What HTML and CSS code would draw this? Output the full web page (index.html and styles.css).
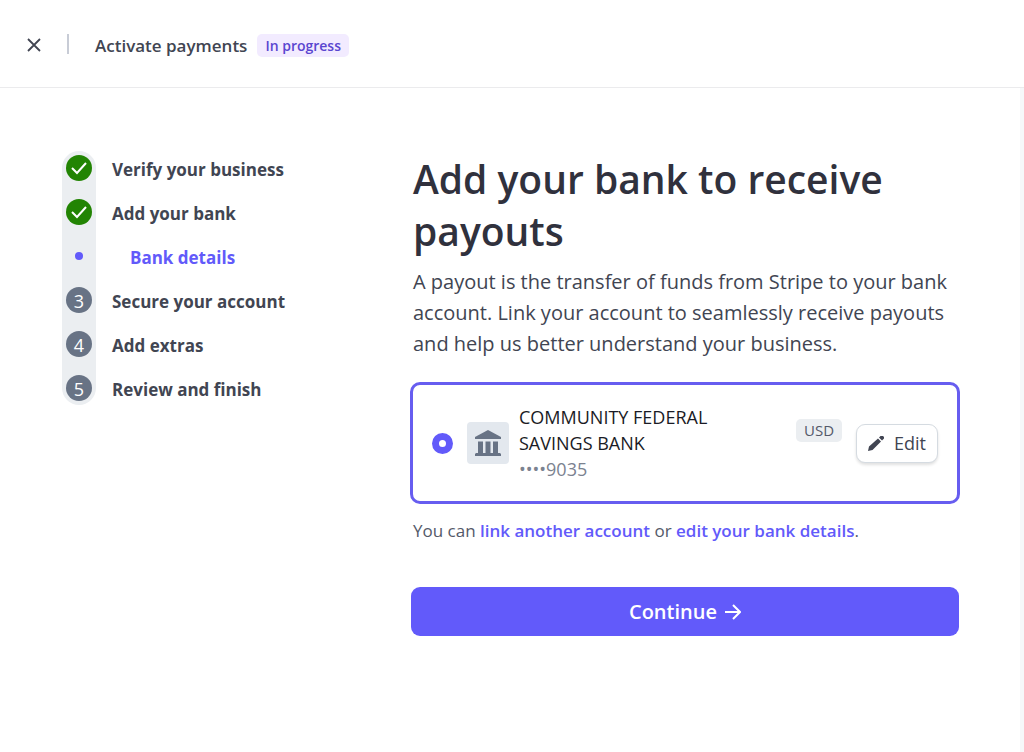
FILE: index.html
```
<!DOCTYPE html>
<html lang="en">
<head>
    <meta charset="UTF-8">
    <meta name="viewport" content="width=device-width, initial-scale=1.0">
    <title>Activate payments</title>
    <link rel="stylesheet" href="styles.css">
</head>
<body>
    <header class="topbar">
        <button class="close" type="button" aria-label="Close">
            <svg width="14" height="14" viewBox="0 0 14 14"><path d="M1 1l12 12M13 1L1 13" fill="none" stroke="currentColor" stroke-width="1.8"/></svg>
        </button>
        <span class="divider"></span>
        <span class="topbar-title">Activate payments</span>
        <span class="badge badge-progress">In progress</span>
    </header>

    <div class="page">
        <nav class="sidebar" aria-label="Setup steps">
            <ol class="steps">
                <li class="step">
                    <span class="marker marker-done"><svg width="18" height="14" viewBox="0 0 18 14"><path d="M2 7l5 5L16 2" fill="none" stroke="currentColor" stroke-width="2"/></svg></span>
                    <a href="#">Verify your business</a>
                </li>
                <li class="step">
                    <span class="marker marker-done"><svg width="18" height="14" viewBox="0 0 18 14"><path d="M2 7l5 5L16 2" fill="none" stroke="currentColor" stroke-width="2"/></svg></span>
                    <a href="#">Add your bank</a>
                </li>
                <li class="step step-current">
                    <span class="marker"><span class="dot"></span></span>
                    <a href="#" aria-current="step">Bank details</a>
                </li>
                <li class="step">
                    <span class="marker marker-todo">3</span>
                    <a href="#">Secure your account</a>
                </li>
                <li class="step">
                    <span class="marker marker-todo">4</span>
                    <a href="#">Add extras</a>
                </li>
                <li class="step">
                    <span class="marker marker-todo">5</span>
                    <a href="#">Review and finish</a>
                </li>
            </ol>
        </nav>

        <main class="content">
            <h1>Add your bank to receive payouts</h1>
            <p class="intro">A payout is the transfer of funds from Stripe to your bank account. Link your account to seamlessly receive payouts and help us better understand your business.</p>

            <div class="account">
                <input class="account-radio" type="radio" name="account" id="account-9035" checked>
                <label class="account-label" for="account-9035">
                    <span class="bank-icon">
                        <svg width="28" height="28" viewBox="0 0 28 28" fill="currentColor">
                            <path d="M14 1L27 8v2H1V8z"/>
                            <path d="M4 12.500h5V24H4zM11.500 12.500h5V24h-5zM19 12.500h5V24h-5zM2 24h24l1 1v2H1v-2z"/>
                        </svg>
                    </span>
                    <span class="account-text">
                        <span class="bank-name">COMMUNITY FEDERAL SAVINGS BANK</span>
                        <span class="bank-number">••••9035</span>
                    </span>
                </label>
                <span class="badge badge-currency">USD</span>
                <button class="edit" type="button">
                    <svg width="16" height="16" viewBox="0 0 16 16" fill="currentColor"><path d="M0 16l1-4.500L10 3.500l3 3-8.500 8.500zM11 2.500L12.500 1H15l1 1v1.500L14 5.500z"/></svg>
                    Edit
                </button>
            </div>

            <p class="hint">You can <a href="#">link another account</a> or <a href="#">edit your bank details</a>.</p>

            <div class="actions">
                <button class="continue" type="button">
                    Continue
                    <svg width="16" height="16" viewBox="0 0 16 16"><path d="M0 8h15M8 1l7 7-7 7" fill="none" stroke="currentColor" stroke-width="2"/></svg>
                </button>
            </div>
        </main>
    </div>
</body>
</html>
```

FILE: styles.css
```
* { box-sizing: border-box; }
body { display: flex; flex-direction: column; min-height: 100vh; margin: 0; font-family: "Open Sans", "Noto Sans", sans-serif; font-size: 18px; color: #414552; background: #fff; }
a { color: #625afa; text-decoration: none; }
button { font-family: inherit; cursor: pointer; }
svg { display: block; flex: none; }

.topbar { display: flex; align-items: center; height: 88px; padding: 3px 24px 0; border-bottom: 1px solid #ebebed; }
.close { padding: 3px; border: 0; background: none; color: #414552; }
.divider { width: 2px; height: 20px; margin: 0 26px 2px 23px; background: #c8ccd6; }
.topbar-title { font-size: 17px; font-weight: 600; }
.badge { border-radius: 5px; font-size: 15px; line-height: 23px; padding: 0 8px; }
.badge-progress { margin-left: 10px; background: #f2ebff; color: #5a46d0; font-size: 14px; font-weight: 600; }

.page { display: flex; flex: 1; padding: 63px 60px 40px 62px; border-right: 4px solid #f6f8fa; }
.sidebar { flex: 0 0 348px; }
/* the grey track is as wide as the markers, the labels run out to its right */
.steps { display: flex; flex-direction: column; gap: 10px; width: 34px; margin: 0; padding: 0; list-style: none; border-radius: 17px; background: #ebeef1; }
.step { display: flex; align-items: center; gap: 16px; height: 34px; white-space: nowrap; }
.step a { padding-top: 2px; color: #414552; font-size: 17px; font-weight: 700; }
.step-current a { margin-left: 18px; color: #625afa; }
.marker { display: flex; align-items: center; justify-content: center; flex: none; width: 34px; height: 34px; }
.marker-done, .marker-todo { width: 26px; height: 26px; margin: 0 4px; border-radius: 50%; color: #fff; }
.marker-done { background: #228403; }
.marker-todo { padding-top: 2px; background: #687385; }
.dot { width: 8px; height: 8px; border-radius: 50%; background: #625afa; }

.content { flex: 1; min-width: 0; }
h1 { margin: 2px 3px 9px; font-size: 39px; line-height: 52px; font-weight: 600; color: #30313d; }
.intro { margin: 0 3px 23px; font-size: 20px; line-height: 31px; }
.account { display: flex; align-items: center; gap: 14px; padding: 19px; border: 3px solid #675df0; border-radius: 10px; }
.account-radio { appearance: none; flex: none; width: 21px; height: 21px; margin: 0; border: 7px solid #625afa; border-radius: 50%; background: #fff; }
.account-label { display: flex; align-items: center; gap: 10px; flex: 1; }
.bank-icon { display: flex; align-items: center; justify-content: center; flex: none; width: 42px; height: 42px; border-radius: 4px; background: #e3e8ee; color: #687385; }
.account-text { display: flex; flex-direction: column; max-width: 220px; line-height: 26px; }
.bank-name { color: #1a1b25; }
.bank-number { color: #7b8290; }
.badge-currency { margin-bottom: 26px; background: #ebeef1; color: #545969; }
.edit { display: flex; align-items: center; gap: 10px; height: 39px; padding: 0 11px; border: 1px solid #d5dbe1; border-radius: 9px; background: #fff; box-shadow: 0 2px 3px rgba(0, 0, 0, 0.12); color: #414552; font-size: 18px; }
.hint { margin: 14px 3px 43px; font-size: 17px; line-height: 26px; color: #545969; }
.hint a { font-weight: 600; }
.actions { padding: 0 1px; }
.continue { display: flex; align-items: center; justify-content: center; gap: 8px; width: 100%; height: 49px; border: 0; border-radius: 9px; background: #625afa; color: #fff; font-size: 20px; font-weight: 600; }
```
